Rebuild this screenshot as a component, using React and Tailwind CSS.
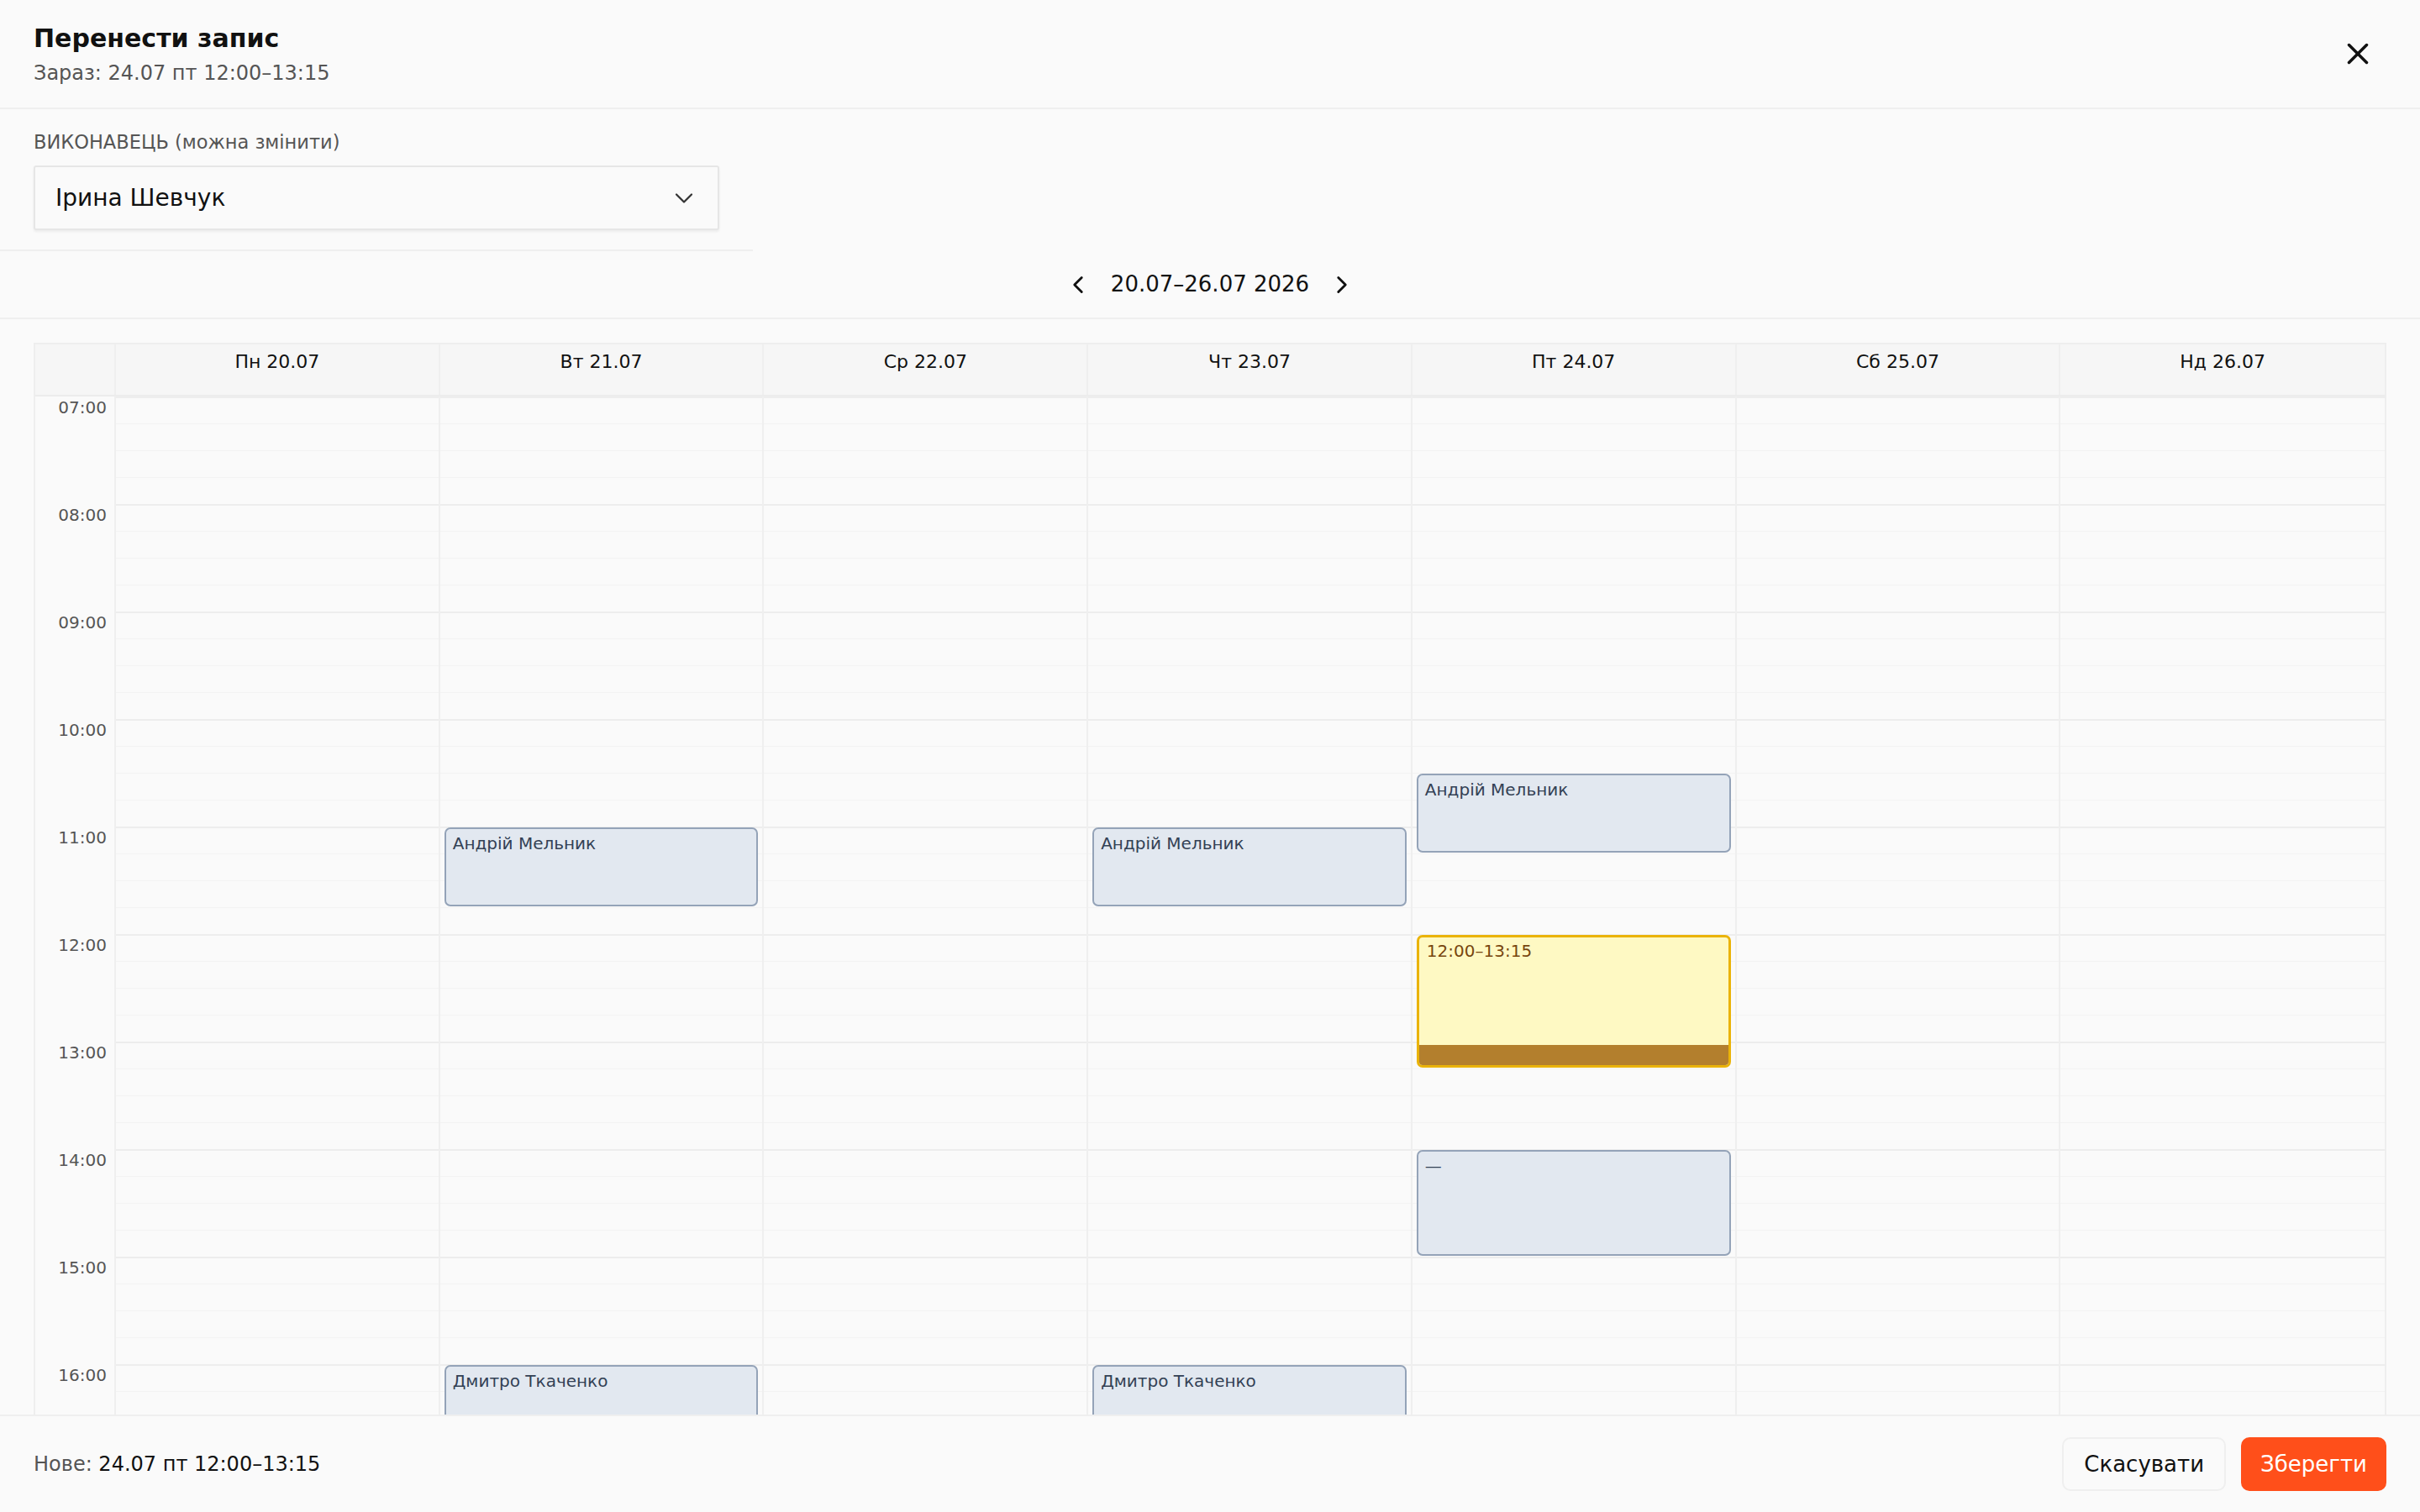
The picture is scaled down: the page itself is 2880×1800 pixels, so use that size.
import { X, ChevronDown, ChevronLeft, ChevronRight } from "lucide-react";

const DAYS = ["Пн 20.07", "Вт 21.07", "Ср 22.07", "Чт 23.07", "Пт 24.07", "Сб 25.07", "Нд 26.07"];
const HOURS = [7, 8, 9, 10, 11, 12, 13, 14, 15, 16, 17, 18, 19, 20];
const HOUR_PX = 128;
const DAY_START = 7 * 60;

const BOOKINGS = [
  { day: 1, from: 11 * 60, to: 11 * 60 + 45, who: "Андрій Мельник" },
  { day: 3, from: 11 * 60, to: 11 * 60 + 45, who: "Андрій Мельник" },
  { day: 4, from: 10 * 60 + 30, to: 11 * 60 + 15, who: "Андрій Мельник" },
  { day: 4, from: 14 * 60, to: 15 * 60, who: "—" },
  { day: 1, from: 16 * 60, to: 16 * 60 + 45, who: "Дмитро Ткаченко" },
  { day: 3, from: 16 * 60, to: 16 * 60 + 45, who: "Дмитро Ткаченко" },
];

const SELECTED = { day: 4, from: 12 * 60, to: 13 * 60 + 15, label: "12:00–13:15" };

const pad = (n) => String(n).padStart(2, "0");

function slotStyle(from, to) {
  return {
    top: ((from - DAY_START) / 60) * HOUR_PX + 1,
    height: ((to - from) / 60) * HOUR_PX - 2,
  };
}

function DayColumn({ index }) {
  const bookings = BOOKINGS.filter((b) => b.day === index);
  const last = index === DAYS.length - 1;
  return (
    <div className={`relative ${last ? "" : "border-r-2 border-[#efefef]"}`}>
      {HOURS.map((h) => (
        <div key={h}>
          <div className="h-[32px] border-t-2 border-[#ededed]" />
          <div className="h-[32px] border-t border-[#f3f3f3]" />
          <div className="h-[32px] border-t border-[#f3f3f3]" />
          <div className="h-[32px] border-t border-[#f3f3f3]" />
        </div>
      ))}

      {bookings.map((b, i) => (
        <div
          key={i}
          className="absolute left-[5px] right-[5px] rounded-[7px] border-2 border-[#94a3b8] bg-[#e2e8f0] px-[8px] pt-[4px] text-[20px] leading-[26px] text-[#334155]"
          style={slotStyle(b.from, b.to)}
        >
          {b.who}
        </div>
      ))}

      {SELECTED.day === index && (
        <div
          className="absolute left-[5px] right-[5px] overflow-hidden rounded-[7px] border-[3.5px] border-[#eab308] bg-[#fef9c3] px-[9px] pt-[3px] text-[20px] leading-[26px] text-[#78460f]"
          style={slotStyle(SELECTED.from, SELECTED.to)}
        >
          {SELECTED.label}
          <div className="absolute bottom-0 left-0 right-0 h-[24px] rounded-b-[3px] bg-[#b37f2d]" />
        </div>
      )}
    </div>
  );
}

export default function App() {
  return (
    <div className="flex h-screen w-full flex-col overflow-hidden bg-[#fafafa] font-['DejaVu_Sans',sans-serif] text-[#111]">
      {/* title bar */}
      <div className="flex h-[130px] shrink-0 items-center justify-between border-b-2 border-[#efefef] pl-[40px] pr-[42px]">
        <div>
          <h1 className="text-[30px] font-bold leading-[42px] text-[#111]">Перенести запис</h1>
          <p className="mt-[3px] text-[24px] leading-[34px] text-[#555]">Зараз: 24.07 пт 12:00–13:15</p>
        </div>
        <button className="flex h-[64px] w-[64px] items-center justify-center text-[#111]">
          <X size={42} strokeWidth={2} />
        </button>
      </div>

      {/* performer picker */}
      <div className="w-[896px] shrink-0 border-b-2 border-[#efefef] px-[40px] pb-[23px] pt-[24px]">
        <label className="block text-[22.5px] leading-[30px] text-[#555]">ВИКОНАВЕЦЬ (можна змінити)</label>
        <div className="mt-[13px] flex h-[77px] w-[816px] items-center justify-between rounded-[3px] border-2 border-[#e6e6e6] bg-[#fafafa] pl-[24px] pr-[22px] shadow-[0_2px_3px_rgba(0,0,0,0.06)]">
          <span className="text-[28px] text-[#111]">Ірина Шевчук</span>
          <ChevronDown size={36} strokeWidth={1.5} className="text-[#333]" />
        </div>
      </div>

      {/* week switcher */}
      <div className="flex h-[81px] shrink-0 items-center justify-center gap-[22px] border-b-2 border-[#efefef]">
        <button className="text-[#111]">
          <ChevronLeft size={34} strokeWidth={2} />
        </button>
        <span className="text-[26px] text-[#111]">20.07–26.07 2026</span>
        <button className="text-[#111]">
          <ChevronRight size={34} strokeWidth={2} />
        </button>
      </div>

      {/* week grid */}
      <div className="min-h-0 flex-1 overflow-hidden px-[40px] pt-[28px]">
        <div className="border-2 border-[#eeeeee]">
          <div className="grid h-[62px] grid-cols-[96px_repeat(7,minmax(0,1fr))] border-b-2 border-[#ececec] bg-[#f6f6f6]">
            <div className="border-r-2 border-[#efefef]" />
            {DAYS.map((d, i) => (
              <div
                key={d}
                className={`pt-[6px] text-center text-[22px] leading-[30px] text-[#111] ${
                  i === DAYS.length - 1 ? "" : "border-r-2 border-[#efefef]"
                }`}
              >
                {d}
              </div>
            ))}
          </div>

          <div className="grid grid-cols-[96px_repeat(7,minmax(0,1fr))]">
            <div className="border-r-2 border-[#efefef]">
              {HOURS.map((h) => (
                <div key={h} className="h-[128px] pr-[9px] pt-[1px] text-right text-[20px] leading-[24px] text-[#555]">
                  {pad(h)}:00
                </div>
              ))}
            </div>
            {DAYS.map((d, i) => (
              <DayColumn key={d} index={i} />
            ))}
          </div>
        </div>
      </div>

      {/* footer */}
      <div className="flex h-[116px] shrink-0 items-center justify-between border-t-2 border-[#efefef] px-[40px]">
        <p className="text-[24px] text-[#111]">
          <span className="text-[#555]">Нове: </span>24.07 пт 12:00–13:15
        </p>
        <div className="flex items-center gap-[18px]">
          <button className="h-[64px] rounded-[10px] border-2 border-[#efefef] bg-[#fafafa] px-[24px] text-[26px] text-[#111]">
            Скасувати
          </button>
          <button className="h-[64px] rounded-[10px] bg-[#ff4f1a] px-[23px] text-[26px] text-white">
            Зберегти
          </button>
        </div>
      </div>
    </div>
  );
}
